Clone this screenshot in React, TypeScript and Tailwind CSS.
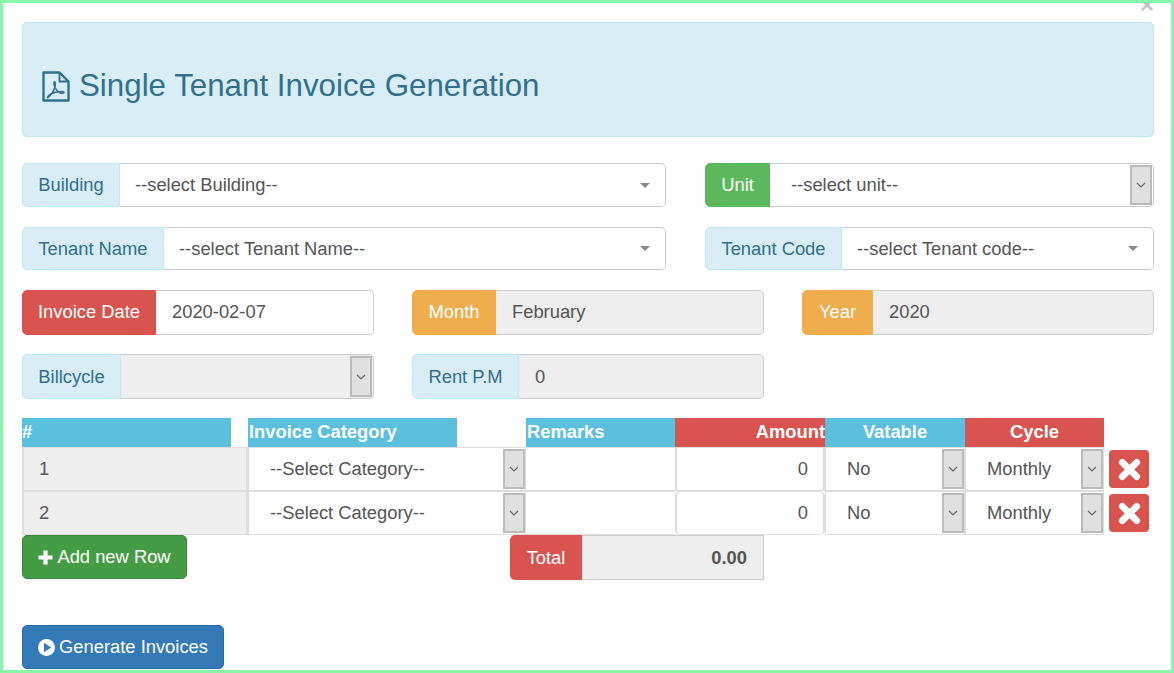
import type { ReactNode } from 'react';

// Bootstrap 3 addon tones
const ADDON = {
  info: 'bg-[#d9edf7] text-[#31708f] border-[#bce8f1]',
  red: 'bg-[#d9534f] text-white border-[#d9534f]',
  green: 'bg-[#5cb85c] text-white border-[#5cb85c]',
  orange: 'bg-[#f0ad4e] text-white border-[#f0ad4e]',
};

function PdfIcon() {
  return (
    <svg width="28" height="31" viewBox="0 0 28 31" fill="none" stroke="currentColor" className="shrink-0">
      <path d="M1.5 1.5h16l9 9v19h-25z" strokeWidth="2.4" strokeLinejoin="round" />
      <path d="M17.5 1.5v9h9" strokeWidth="1.8" />
      <path
        d="M5.5 26.5c3-1.5 6-6 7.5-10.5.6-2 .6-5-.4-5.2-1-.1-.9 3 .2 5.2 1.5 3 4 5.5 5.5 6 1.500.5 3.700.5 3.700-.5s-2.500-1.200-5.500-.7c-3.500.6-7 1.500-9 3-1.200.9-2 2.200-2 2.700z"
        strokeWidth="1.5"
      />
    </svg>
  );
}

function CrossIcon() {
  return (
    <svg width="25" height="25" viewBox="0 0 26 26" stroke="currentColor" strokeWidth="7" strokeLinecap="round">
      <path d="M5.500 5.500l15 15M20.500 5.500l-15 15" />
    </svg>
  );
}

function PlusIcon() {
  return (
    <svg width="15" height="15" viewBox="0 0 15 15" stroke="currentColor" strokeWidth="4.200" className="shrink-0">
      <path d="M7.500 0.500v14M0.500 7.500h14" />
    </svg>
  );
}

function PlayCircleIcon() {
  return (
    <svg width="17" height="17" viewBox="0 0 17 17" className="shrink-0">
      <circle cx="8.500" cy="8.500" r="8.500" fill="#fff" />
      <path d="M6 3.800l7.200 4.700-7.200 4.700z" fill="#337ab7" />
    </svg>
  );
}

function Chevron() {
  return (
    <svg width="10" height="6" viewBox="0 0 10 6" fill="none" stroke="#666" strokeWidth="1.2">
      <path d="M1 1l4 4 4-4" />
    </svg>
  );
}

// native-looking select stepper on the right edge of a control
function NativeArrow() {
  return (
    <span className="flex h-full w-[22px] shrink-0 items-center justify-center border-2 border-[#bbb] bg-[#e0e0e0]">
      <Chevron />
    </span>
  );
}

function Caret() {
  return <span className="mr-[14px] h-0 w-0 border-x-[5px] border-t-[5px] border-x-transparent border-t-[#888]" />;
}

function Group({
  label,
  tone,
  width,
  lift,
  children,
}: {
  label: string;
  tone: keyof typeof ADDON;
  width: string;
  lift?: boolean;
  children: ReactNode;
}) {
  return (
    <div className="flex h-full w-full">
      <span
        className={
          'flex shrink-0 items-center justify-center rounded-l-[5px] border ' +
          width +
          ' ' +
          ADDON[tone] +
          (lift ? ' pb-[2px]' : '')
        }
      >
        {label}
      </span>
      {children}
    </div>
  );
}

function Field({
  text,
  disabled,
  right,
  lift,
  px = 'pl-[15px]',
}: {
  text?: string;
  disabled?: boolean;
  right?: ReactNode;
  lift?: boolean;
  px?: string;
}) {
  return (
    <div
      className={
        'flex min-w-0 flex-1 items-center justify-between rounded-r-[5px] border border-l-0 border-[#ccc] p-px text-[#555] ' +
        px +
        (disabled ? ' bg-[#eee]' : ' bg-white') +
        (lift ? ' pb-[3px]' : '')
      }
    >
      <span>{text}</span>
      {right}
    </div>
  );
}

function CellSelect({ text, pl }: { text: string; pl: string }) {
  return (
    <div className={'flex h-[44px] items-center justify-between border border-[#ddd] bg-white py-px text-[#555] ' + pl}>
      <span>{text}</span>
      <NativeArrow />
    </div>
  );
}

function Row({ n, roundAmount }: { n: number; roundAmount?: boolean }) {
  return (
    <>
      <div className="flex h-[44px] items-center border border-x-2 border-[#ddd] bg-[#eee] pl-[15px] text-[#555]">{n}</div>
      <CellSelect text="--Select Category--" pl="pl-[21px]" />
      <div className="h-[44px] border-y border-[#ddd] bg-white" />
      <div
        className={
          'flex h-[44px] items-center justify-end border border-x-2 border-[#ddd] bg-white pr-[15px] text-[#555] ' +
          (roundAmount ? 'rounded-[5px]' : '')
        }
      >
        0
      </div>
      <CellSelect text="No" pl="pl-[21px]" />
      <CellSelect text="Monthly" pl="pl-[21px]" />
      <div className="flex h-[44px] items-center pl-[5px]">
        <button className="flex h-[38px] w-[40px] items-center justify-center rounded-[4px] bg-[#d9534f] text-white">
          <CrossIcon />
        </button>
      </div>
    </>
  );
}

export default function App() {
  return (
    <div className="relative h-[673px] w-[1174px] overflow-hidden border-[3px] border-[#8af5a9] bg-white font-['Liberation_Sans',Arial,sans-serif] text-[18.35px]">
      <span className="absolute right-[17px] top-[-8px] text-[24px] font-bold leading-[20px] text-[#c4c4c4]">×</span>

      <div className="flex flex-col pl-[19px] pr-[17px] pt-[19px]">
        <div className="flex h-[115px] items-center gap-[9px] rounded-[5px] border border-[#bce8f1] bg-[#d9edf7] pl-[19px] pt-[14px] text-[#31708f]">
          <PdfIcon />
          <h1 className="text-[31.3px]">Single Tenant Invoice Generation</h1>
        </div>

        <div className="mt-[26px] flex h-[44px] justify-between">
          <div className="w-[644px]">
            <Group label="Building" tone="info" width="w-[98px]">
              <Field text="--select Building--" right={<Caret />} />
            </Group>
          </div>
          <div className="w-[449px]">
            <Group label="Unit" tone="green" width="w-[65px]">
              <Field text="--select unit--" px="pl-[21px]" right={<NativeArrow />} />
            </Group>
          </div>
        </div>

        <div className="mt-[20px] flex h-[43px] justify-between">
          <div className="w-[644px]">
            <Group label="Tenant Name" tone="info" width="w-[142px]">
              <Field text="--select Tenant Name--" right={<Caret />} />
            </Group>
          </div>
          <div className="w-[449px]">
            <Group label="Tenant Code" tone="info" width="w-[137px]">
              <Field text="--select Tenant code--" right={<Caret />} />
            </Group>
          </div>
        </div>

        <div className="mt-[20px] grid h-[45px] grid-cols-3 gap-x-[38px]">
          <Group label="Invoice Date" tone="red" width="w-[134px]" lift>
            <Field text="2020-02-07" px="pl-[16px]" lift />
          </Group>
          <Group label="Month" tone="orange" width="w-[84px]" lift>
            <Field text="February" px="pl-[16px]" disabled lift />
          </Group>
          <Group label="Year" tone="orange" width="w-[71px]" lift>
            <Field text="2020" px="pl-[16px]" disabled lift />
          </Group>
        </div>

        <div className="mt-[19px] grid h-[45px] grid-cols-3 gap-x-[38px]">
          <Group label="Billcycle" tone="info" width="w-[99px]">
            <Field disabled right={<NativeArrow />} />
          </Group>
          <Group label="Rent P.M" tone="info" width="w-[107px]">
            <Field text="0" px="pl-[16px]" disabled />
          </Group>
        </div>

        <div className="mt-[19px] grid grid-cols-[226px_278px_149px_150px_140px_139px_45px]">
          <div className="h-[29px] w-[209px] bg-[#5bc0de] font-bold leading-[28px] text-white">#</div>
          <div className="h-[29px] w-[209px] bg-[#5bc0de] pl-px font-bold leading-[28px] text-white">Invoice Category</div>
          <div className="h-[29px] bg-[#5bc0de] pl-px font-bold leading-[28px] text-white">Remarks</div>
          <div className="h-[29px] bg-[#d9534f] text-right font-bold leading-[28px] text-white">Amount</div>
          <div className="h-[29px] bg-[#5bc0de] text-center font-bold leading-[28px] text-white">Vatable</div>
          <div className="h-[29px] bg-[#d9534f] text-center font-bold leading-[28px] text-white">Cycle</div>
          <div />
          <Row n={1} />
          <Row n={2} roundAmount />
        </div>

        <div className="flex items-start">
          <button className="flex h-[44px] w-[165px] items-center justify-center gap-[4px] rounded-[5px] border border-[#398439] bg-[#449d44] text-white">
            <PlusIcon />
            Add new Row
          </button>
          <div className="ml-[323px] flex h-[45px] w-[254px]">
            <span className="flex w-[72px] items-center justify-center rounded-l-[5px] bg-[#d9534f] text-white">Total</span>
            <div className="flex flex-1 items-center justify-end border border-l-0 border-[#ccc] bg-[#eee] pr-[16px] font-bold text-[#555]">
              0.00
            </div>
          </div>
        </div>

        <button className="mt-[45px] flex h-[44px] w-[202px] items-center justify-center gap-[4px] rounded-[5px] border border-[#2e6da4] bg-[#337ab7] text-white">
          <PlayCircleIcon />
          Generate Invoices
        </button>
      </div>
    </div>
  );
}
